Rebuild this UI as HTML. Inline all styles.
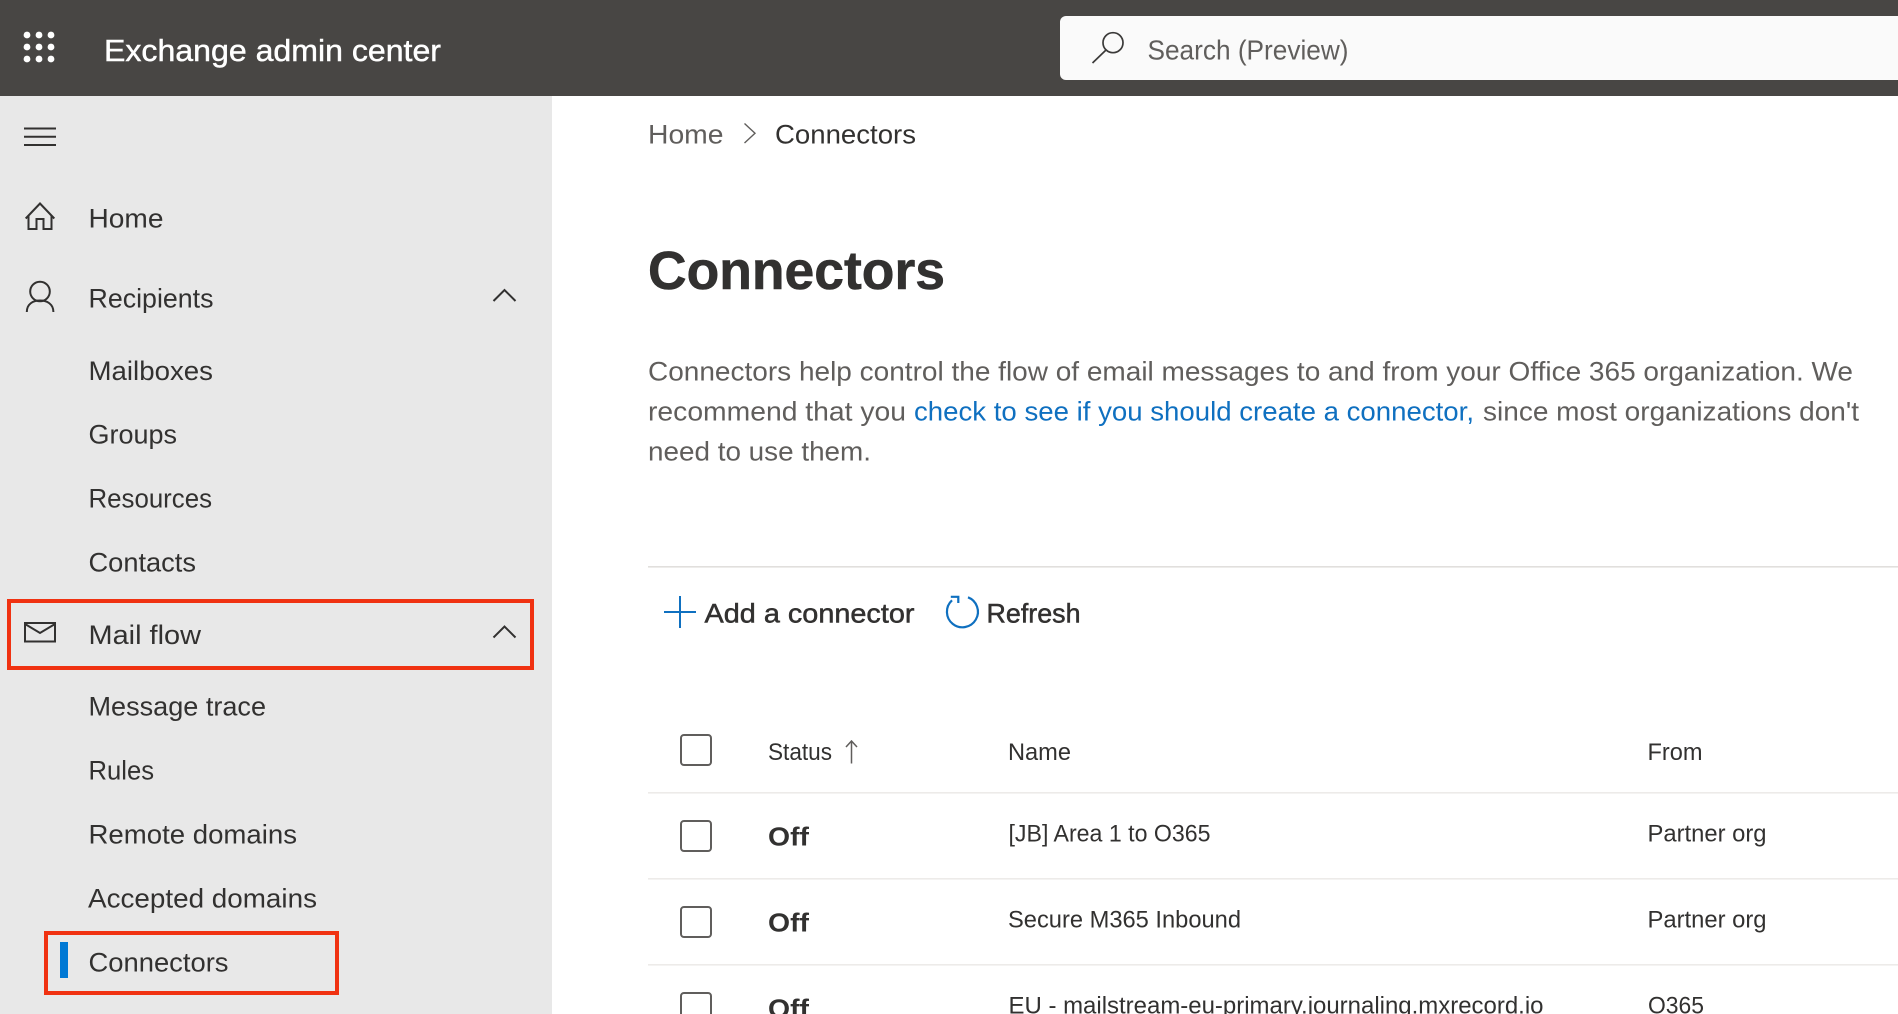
<!DOCTYPE html>
<html lang="en">
<head>
<meta charset="utf-8">
<title>Exchange admin center - Connectors</title>
<style>
html,body{margin:0;padding:0;width:1898px;height:1014px;overflow:hidden;background:#fff}
svg{display:block;position:absolute;left:0;top:0}
text{font-family:"Liberation Sans",sans-serif;fill:#323130;white-space:pre}
.nav{font-size:27px}
.p{font-size:27px;fill:#605e5c}
.t{font-size:24px}
.semi{font-size:27px;stroke:#323130;stroke-width:.5px}
.off{font-size:26px;font-weight:700}
.ic{fill:none;stroke:#323130;stroke-width:2}
</style>
</head>
<body>
<svg width="1898" height="1014" viewBox="0 0 1898 1014" xmlns="http://www.w3.org/2000/svg">
<rect x="0" y="0" width="1898" height="1014" fill="#ffffff"/>
<rect x="0" y="96" width="552" height="918" fill="#e8e8e8"/>
<rect x="0" y="0" width="1898" height="96" fill="#484644"/>

<!-- waffle -->
<g fill="#ffffff">
<circle cx="27" cy="35" r="3.4"/><circle cx="39" cy="35" r="3.4"/><circle cx="51" cy="35" r="3.4"/>
<circle cx="27" cy="47" r="3.4"/><circle cx="39" cy="47" r="3.4"/><circle cx="51" cy="47" r="3.4"/>
<circle cx="27" cy="59" r="3.4"/><circle cx="39" cy="59" r="3.4"/><circle cx="51" cy="59" r="3.4"/>
</g>
<text x="104" y="61" font-size="31" style="fill:#fff;stroke:#fff;stroke-width:.45px" textLength="337" lengthAdjust="spacingAndGlyphs">Exchange admin center</text>

<!-- search -->
<path d="M1898 16H1066a6 6 0 0 0-6 6v52a6 6 0 0 0 6 6H1898z" fill="#fafafa"/>
<circle cx="1113" cy="42.7" r="10" fill="none" stroke="#3b3a39" stroke-width="1.7"/>
<path d="M1106 50L1092.5 63" fill="none" stroke="#3b3a39" stroke-width="1.7"/>
<text x="1147.5" y="59.5" font-size="28" style="fill:#605e5c" textLength="201" lengthAdjust="spacingAndGlyphs">Search (Preview)</text>

<!-- hamburger -->
<path d="M24 128.5H56M24 136.8H56M24 145H56" fill="none" stroke="#323130" stroke-width="2"/>

<!-- home -->
<path d="M25.7 218.5L40 203.5L54.3 218.5M28.5 215.5V229H36.5V219H43.5V229H51.5V215.5" class="ic"/>
<text x="88.5" y="227.7" class="nav" textLength="75" lengthAdjust="spacingAndGlyphs">Home</text>

<!-- recipients -->
<circle cx="40" cy="291.5" r="9.8" class="ic"/>
<path d="M26.8 312C26.8 304 33 300.5 40 300.5S53.4 304 53.4 312" class="ic"/>
<text x="88.5" y="307.7" class="nav" textLength="125" lengthAdjust="spacingAndGlyphs">Recipients</text>
<path d="M493.5 301L504.5 290L515.5 301" class="ic"/>

<text x="88.5" y="380" class="nav" textLength="124.500" lengthAdjust="spacingAndGlyphs">Mailboxes</text>
<text x="88.5" y="443.5" class="nav" textLength="88.500" lengthAdjust="spacingAndGlyphs">Groups</text>
<text x="88.5" y="507.3" class="nav" textLength="123.500" lengthAdjust="spacingAndGlyphs">Resources</text>
<text x="88.5" y="571.3" class="nav" textLength="107.500" lengthAdjust="spacingAndGlyphs">Contacts</text>

<!-- mail flow -->
<rect x="9" y="601" width="523" height="67" fill="none" stroke="#f03211" stroke-width="4"/>
<rect x="25" y="623" width="30" height="18.5" class="ic"/>
<path d="M25 624L40 633L55 624" class="ic"/>
<text x="88.5" y="644" class="nav" textLength="112.500" lengthAdjust="spacingAndGlyphs">Mail flow</text>
<path d="M493.5 637.5L504.5 626.5L515.5 637.5" class="ic"/>

<text x="88.5" y="715.7" class="nav" textLength="177.500" lengthAdjust="spacingAndGlyphs">Message trace</text>
<text x="88.5" y="779.3" class="nav" textLength="65.500" lengthAdjust="spacingAndGlyphs">Rules</text>
<text x="88.5" y="843.3" class="nav" textLength="208.500" lengthAdjust="spacingAndGlyphs">Remote domains</text>
<text x="88" y="907.3" class="nav" textLength="229" lengthAdjust="spacingAndGlyphs">Accepted domains</text>

<!-- connectors nav -->
<rect x="46" y="933" width="291" height="60" fill="none" stroke="#f03211" stroke-width="4"/>
<rect x="60" y="942" width="8" height="36" fill="#0078d4"/>
<text x="88.5" y="971.3" class="nav" textLength="140" lengthAdjust="spacingAndGlyphs">Connectors</text>

<!-- breadcrumb -->
<text x="648" y="143.5" class="p" textLength="75.500" lengthAdjust="spacingAndGlyphs">Home</text>
<path d="M744.5 123.5L755 133.300L744.5 143" fill="none" stroke="#605e5c" stroke-width="1.4"/>
<text x="775" y="143.5" class="nav" textLength="141" lengthAdjust="spacingAndGlyphs">Connectors</text>

<!-- title -->
<text x="648" y="289" font-size="54" font-weight="700" style="stroke:#323130;stroke-width:.6px" textLength="297" lengthAdjust="spacingAndGlyphs">Connectors</text>

<!-- paragraph -->
<text x="648" y="380.7" class="p" textLength="1205" lengthAdjust="spacingAndGlyphs">Connectors help control the flow of email messages to and from your Office 365 organization. We</text>
<text x="648" y="420.7" class="p" textLength="258" lengthAdjust="spacingAndGlyphs">recommend that you</text>
<text x="914" y="420.7" font-size="27" style="fill:#0f70c0" textLength="560" lengthAdjust="spacingAndGlyphs">check to see if you should create a connector,</text>
<text x="1483" y="420.7" class="p" textLength="376" lengthAdjust="spacingAndGlyphs">since most organizations don't</text>
<text x="648" y="460.7" class="p" textLength="223" lengthAdjust="spacingAndGlyphs">need to use them.</text>

<!-- divider -->
<rect x="648" y="566" width="1250" height="1.6" fill="#e1dfdd"/>

<!-- commands -->
<path d="M664 612H696M680 596V628" fill="none" stroke="#0f70c0" stroke-width="2"/>
<text x="704.5" y="622.7" class="semi" textLength="210" lengthAdjust="spacingAndGlyphs">Add a connector</text>
<path d="M968 597.300A15.5 15.5 0 1 1 952 600.300" fill="none" stroke="#0f70c0" stroke-width="2.2"/>
<path d="M950.800 596.800H958.300V603" fill="none" stroke="#0f70c0" stroke-width="2.2"/>
<text x="986.5" y="622.7" class="semi" textLength="94" lengthAdjust="spacingAndGlyphs">Refresh</text>

<!-- table -->
<rect x="681" y="735" width="30" height="30" rx="3" fill="none" stroke="#605e5c" stroke-width="2"/>
<text x="768" y="760" class="t" textLength="64" lengthAdjust="spacingAndGlyphs">Status</text>
<path d="M851.5 741V763.5M846 747L851.5 741L857 747" fill="none" stroke="#605e5c" stroke-width="1.5"/>
<text x="1008" y="760" class="t" textLength="63" lengthAdjust="spacingAndGlyphs">Name</text>
<text x="1647.5" y="760" class="t" textLength="55" lengthAdjust="spacingAndGlyphs">From</text>
<rect x="648" y="792" width="1250" height="1.6" fill="#edebe9"/>

<rect x="681" y="821" width="30" height="30" rx="3" fill="none" stroke="#605e5c" stroke-width="2"/>
<text x="768" y="845.3" class="off" textLength="41" lengthAdjust="spacingAndGlyphs">Off</text>
<text x="1008.5" y="841.7" class="t" textLength="202" lengthAdjust="spacingAndGlyphs">[JB] Area 1 to O365</text>
<text x="1647.5" y="841.7" class="t" textLength="119" lengthAdjust="spacingAndGlyphs">Partner org</text>
<rect x="648" y="878" width="1250" height="1.6" fill="#edebe9"/>

<rect x="681" y="907" width="30" height="30" rx="3" fill="none" stroke="#605e5c" stroke-width="2"/>
<text x="768" y="931.3" class="off" textLength="41" lengthAdjust="spacingAndGlyphs">Off</text>
<text x="1008" y="927.7" class="t" textLength="233" lengthAdjust="spacingAndGlyphs">Secure M365 Inbound</text>
<text x="1647.5" y="927.7" class="t" textLength="119" lengthAdjust="spacingAndGlyphs">Partner org</text>
<rect x="648" y="964" width="1250" height="1.6" fill="#edebe9"/>

<rect x="681" y="993" width="30" height="30" rx="3" fill="none" stroke="#605e5c" stroke-width="2"/>
<text x="768" y="1017.3" class="off" textLength="41" lengthAdjust="spacingAndGlyphs">Off</text>
<text x="1008.5" y="1013.7" class="t" textLength="535" lengthAdjust="spacingAndGlyphs">EU - mailstream-eu-primary.journaling.mxrecord.io</text>
<text x="1648" y="1013.7" class="t" textLength="56" lengthAdjust="spacingAndGlyphs">O365</text>
</svg>
</body>
</html>
